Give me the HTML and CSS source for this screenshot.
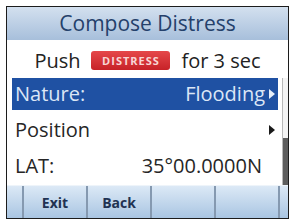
FILE: index.html
```html
<!DOCTYPE html>
<html>
<head>
<meta charset="utf-8">
<link rel="stylesheet" href="styles.css">
</head>
<body>
<div class="screen">
  <div class="title">Compose Distress</div>
  <div class="prompt"><span>Push</span><span class="badge">DISTRESS</span><span>for 3 sec</span></div>
  <div class="main">
    <div class="list">
      <div class="row sel"><span class="label">Nature:</span><span class="value">Flooding</span><span class="arrow"></span></div>
      <div class="row"><span class="label">Position</span><span class="value"></span><span class="arrow"></span></div>
      <div class="row"><span class="label">LAT:</span><span class="value">35°00.0000N</span><span class="arrow none"></span></div>
    </div>
    <div class="scroll"><div class="thumb"></div></div>
  </div>
  <div class="keys">
    <div class="edge first"></div>
    <div class="key">Exit</div>
    <div class="key">Back</div>
    <div class="key"></div>
    <div class="key"></div>
    <div class="edge last"></div>
  </div>
</div>
</body>
</html>
```
FILE: styles.css
```css
html, body {
  margin: 0;
  background: #fff;
  font-family: "Open Sans", sans-serif;
}
.screen {
  margin: 6px 0 0 6px;
  width: 283px;
  height: 213px;
  box-sizing: border-box;
  border: 1px solid #1c1c1c;
  display: flex;
  flex-direction: column;
  background: #fff;
  overflow: hidden;
}
.title {
  height: 33px;
  flex: none;
  display: flex;
  align-items: center;
  justify-content: center;
  background: linear-gradient(#d3e0ef, #a7bfdb);
  color: #24406b;
  font-size: 21px;
  line-height: 1;
}
.prompt {
  height: 36px;
  flex: none;
  box-sizing: border-box;
  padding-top: 5px;
  display: flex;
  align-items: center;
  justify-content: center;
  gap: 11px;
  font-size: 20px;
  color: #222;
  line-height: 1;
}
.badge {
  width: 79px;
  height: 19px;
  border-radius: 3px;
  background: linear-gradient(#e5484a, #c72228);
  color: #f8d6d6;
  font-size: 11px;
  font-weight: bold;
  letter-spacing: 1px;
  display: flex;
  align-items: center;
  justify-content: center;
}
.main {
  flex: 1;
  display: flex;
  padding-left: 5px;
}
.list {
  width: 266px;
  display: flex;
  flex-direction: column;
}
.row {
  height: 32px;
  margin: 2px 0;
  display: flex;
  align-items: center;
  padding: 0 3px;
  font-size: 20px;
  color: #262626;
  line-height: 1;
}
.row.sel {
  background: #1f51a3;
  color: #dbe6f6;
}
.label {
  flex: none;
}
.value {
  flex: 1;
  text-align: right;
}
.arrow {
  width: 0;
  height: 0;
  margin-left: 4px;
  border-left: 6px solid #1a1a1a;
  border-top: 5px solid transparent;
  border-bottom: 5px solid transparent;
}
.row.sel .arrow {
  border-left-color: #e6eef9;
}
.arrow.none {
  border-left-color: transparent;
  width: 3px;
}
.scroll {
  margin: 2px 0 0 4px;
  width: 6px;
  box-sizing: border-box;
  border-left: 1px solid #b8b8b8;
  background: #f4f4f4;
  display: flex;
  flex-direction: column;
  justify-content: flex-end;
}
.thumb {
  height: 47px;
  background: #5e5e5e;
}
.keys {
  height: 33px;
  flex: none;
  display: flex;
  background: linear-gradient(#dce9f6, #a9c5e2);
  border-top: 1px solid #eef4fa;
  box-sizing: border-box;
}
.edge.first {
  width: 15px;
}
.edge.last {
  flex: 1;
  border-left: 2px solid #8599b0;
}
.key {
  width: 62px;
  border-left: 2px solid #8599b0;
  display: flex;
  align-items: center;
  justify-content: center;
  font-size: 14px;
  font-weight: bold;
  color: #213252;
}
```
